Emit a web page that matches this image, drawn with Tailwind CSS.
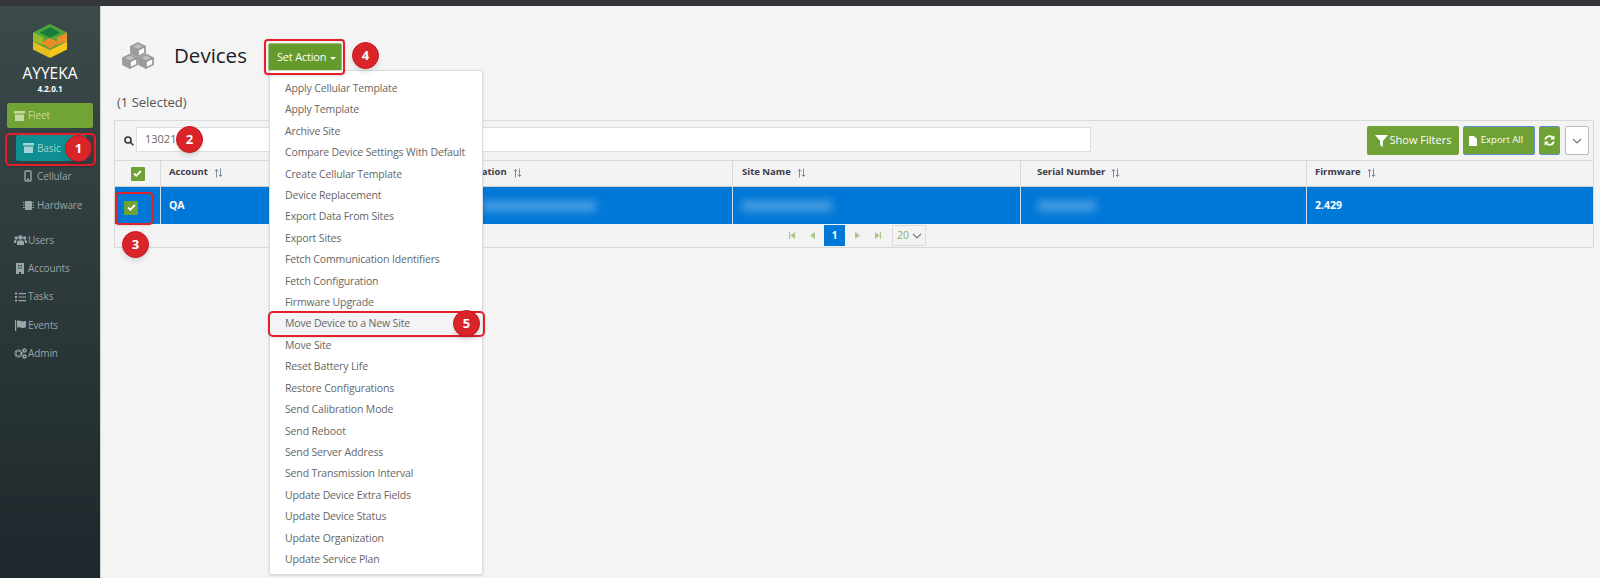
<!DOCTYPE html>
<html lang="en">
<head>
  <meta charset="UTF-8" />
  <title>Devices</title>
  <script src="https://cdn.jsdelivr.net/npm/@tailwindcss/browser@4"></script>
</head>
<body class="relative h-[578px] w-[1600px] overflow-hidden bg-[#f4f4f4] font-['Open_Sans',sans-serif] text-[#444]">

  <div class="h-[6px] bg-[#35363a]"></div>

  <div class="flex h-[572px]">
    <!-- sidebar -->
    <aside class="w-[101px] shrink-0 border-r border-[#cfd2d2] bg-gradient-to-b from-[#3c4a4a] to-[#1e282c] text-[10px] tracking-[-0.1px] text-[#9aa5a5]">
      <div class="flex justify-center pt-[18px]">
        <svg width="34" height="34" viewBox="3 1 30 34" preserveAspectRatio="none">
          <polygon points="18,1 33,9.500 33,18.500 18,27 3,18.500 3,9.500" fill="#4ea53a"/>
          <polygon points="18,4 27,9.500 18,15 9,9.500" fill="#1a7c3c"/>
          <polygon points="3,9.500 12,14.500 12,22 3,18.500" fill="#9ab92f"/>
          <polygon points="33,9.500 24,14.500 24,22 33,18.500" fill="#e8912a"/>
          <polygon points="18,15 26,19.500 18,26 10,19.500" fill="#ea8a24"/>
          <polygon points="3,18.500 18,27 18,35 3,26.500" fill="#e6c022"/>
          <polygon points="33,18.500 18,27 18,35 33,26.500" fill="#f6c81c"/>
        </svg>
      </div>
      <div class="mt-[5px] text-center text-[15.500px] leading-[20px] tracking-normal text-white">AYYEKA</div>
      <div class="text-center text-[8px] font-bold leading-[12px] tracking-normal text-white">4.2.0.1</div>

      <div class="mx-[7px] mt-[8px] flex h-[25px] items-center gap-[3px] rounded-[2px] bg-[#72a335] pl-[7px] text-[#c4d8a0]">
        <svg width="11" height="10" viewBox="0 0 11 10" fill="#c4d8a0"><path d="M0 0h11v2.500H0zM1 3.500h9V10H1z"/></svg>
        <span>Fleet</span>
      </div>
      <div class="ml-[16px] mr-[14px] mt-[7px] flex h-[26px] items-center gap-[3px] rounded-[2px] bg-[#0e8f91] pl-[7px] text-[#a5d2d2]">
        <svg width="11" height="10" viewBox="0 0 11 10" fill="#a5d2d2"><path d="M0 0h11v2.500H0zM1 3.500h9V10H1z"/></svg>
        <span>Basic</span>
      </div>
      <div class="mt-[1px] flex h-[28px] items-center gap-[5px] pl-[24px]">
        <svg width="8" height="12" viewBox="0 0 8 12" fill="none" stroke="#9aa5a5" stroke-width="1.400"><rect x="1" y="1" width="6" height="10" rx="1"/><path d="M3 9.300h2"/></svg>
        <span>Cellular</span>
      </div>
      <div class="mt-[1px] flex h-[29px] items-center gap-[3px] pl-[23px]">
        <svg width="11" height="11" viewBox="0 0 11 11" fill="#9aa5a5"><rect x="2" y="1" width="7" height="9" rx="1"/><path d="M0 2h1.500v1H0zM0 4.500h1.500v1H0zM0 7h1.500v1H0zM9.500 2H11v1H9.500zM9.500 4.500H11v1H9.500zM9.500 7H11v1H9.500z"/></svg>
        <span>Hardware</span>
      </div>

      <div class="mt-[6px] flex h-[28px] items-center gap-[1px] pl-[14px]">
        <svg width="13" height="10" viewBox="0 0 13 10" fill="#9aa5a5"><circle cx="6.500" cy="2.500" r="2.300"/><circle cx="2.300" cy="3" r="1.700"/><circle cx="10.700" cy="3" r="1.700"/><path d="M3 10V7.500c0-1.500 1-2.300 3.500-2.300S10 6 10 7.500V10zM0 8V6.500C0 5.500.7 5 2 5l.6.5C2.200 6 2 6.800 2 8zM13 8V6.500C13 5.500 12.300 5 11 5l-.6.5c.4.500.6 1.300.6 2.500z"/></svg>
        <span>Users</span>
      </div>
      <div class="flex h-[28.500px] items-center gap-[4px] pl-[16px]">
        <svg width="8" height="11" viewBox="0 0 8 11" fill="#9aa5a5"><path d="M0 0h8v11H5V9H3v2H0zM2 2v1.300h1.500V2zM4.500 2v1.300H6V2zM2 4.500v1.300h1.500V4.500zM4.500 4.500v1.300H6V4.500z" fill-rule="evenodd"/></svg>
        <span>Accounts</span>
      </div>
      <div class="flex h-[28.500px] items-center gap-[2px] pl-[15px]">
        <svg width="11" height="10" viewBox="0 0 11 10" fill="#9aa5a5"><path d="M0 .5h2v2H0zM3.500 1H11v1.200H3.500zM0 4h2v2H0zM3.500 4.400H11v1.200H3.500zM0 7.500h2v2H0zM3.500 8H11v1.200H3.500z"/></svg>
        <span>Tasks</span>
      </div>
      <div class="flex h-[28.500px] items-center gap-[2px] pl-[15px]">
        <svg width="11" height="11" viewBox="0 0 11 11" fill="#9aa5a5"><path d="M0 0h1.200v11H0zM2 1c2-1 3.500 0 5 .3 1.300.2 2.500 0 4-.6v6.600c-1.500.7-2.700.9-4 .7C5.500 7.700 4 6.800 2 7.700z"/></svg>
        <span>Events</span>
      </div>
      <div class="flex h-[28.500px] items-center gap-[1px] pl-[14px]">
        <svg width="13" height="11" viewBox="0 0 13 11"><circle cx="4.500" cy="5.500" r="3" fill="none" stroke="#9aa5a5" stroke-width="2.200" stroke-dasharray="1.500 .6"/><circle cx="10.500" cy="2.500" r="1.500" fill="none" stroke="#9aa5a5" stroke-width="1.500"/><circle cx="10.500" cy="8.500" r="1.500" fill="none" stroke="#9aa5a5" stroke-width="1.500"/></svg>
        <span>Admin</span>
      </div>
    </aside>

    <!-- main -->
    <main class="min-w-0 flex-1 pl-[13px] pr-[6px]">
      <div class="flex items-center pl-[8px] pt-[33px]">
        <svg width="32" height="27" viewBox="0 0 32 27">
          <g stroke="#9b9b9b" stroke-width="1.800" stroke-linejoin="round">
            <polygon points="16,1 23,4.500 16,8 9,4.500" fill="#bdbdbd"/>
            <polygon points="9,4.500 16,8 16,14.500 9,11" fill="#9b9b9b"/>
            <polygon points="23,4.500 16,8 16,14.500 23,11" fill="#fff"/>
            <polygon points="8,12.500 15,16 8,19.500 1,16" fill="#bdbdbd"/>
            <polygon points="1,16 8,19.500 8,26 1,22.500" fill="#9b9b9b"/>
            <polygon points="15,16 8,19.500 8,26 15,22.500" fill="#fff"/>
            <polygon points="24,12.500 31,16 24,19.500 17,16" fill="#bdbdbd"/>
            <polygon points="17,16 24,19.500 24,26 17,22.500" fill="#9b9b9b"/>
            <polygon points="31,16 24,19.500 24,26 31,22.500" fill="#fff"/>
          </g>
        </svg>
        <h1 class="ml-[20px] w-[74px] whitespace-nowrap text-[20.500px] font-medium leading-[32px] text-[#1c1c24]">Devices</h1>
        <button class="ml-[20px] mt-[4px] flex h-[28px] w-[74px] items-center gap-[4px] rounded-[2px] border border-[#9cbc7a] bg-[#649b2c] pl-[8px] pt-[1px] text-[11px] tracking-[-0.2px] text-white">
          Set Action
          <span class="mt-[1px] h-0 w-0 border-x-[3px] border-t-[3px] border-x-transparent border-t-white"></span>
        </button>
      </div>

      <p class="pl-[3px] pt-[21px] text-[13px] leading-[20px] text-[#555]">(1 Selected)</p>

      <section class="mt-[8px] w-[1480px] border border-[#d9d9d9] bg-[#f3f3f3]">
        <!-- toolbar -->
        <div class="flex h-[39px] items-center">
          <svg class="ml-[9px]" width="10" height="10" viewBox="0 0 10 10" fill="none" stroke="#333" stroke-width="1.600"><circle cx="4" cy="4" r="3"/><path d="M6.300 6.300 9.300 9.300"/></svg>
          <div class="mb-[2px] ml-[2px] flex h-[25px] w-[955px] items-center border border-[#dedede] bg-white pl-[8px] text-[11px] text-[#666]">13021</div>
          <button class="ml-[276px] flex h-[29px] w-[92px] items-center justify-center gap-[2px] rounded-[2px] bg-[#70a135] text-[11px] text-white">
            <svg width="13" height="12" viewBox="0 0 14 13" fill="white"><path d="M0 0h14L8.500 6.500V13l-3-2V6.500z"/></svg>
            Show Filters
          </button>
          <button class="ml-[4px] flex h-[29px] w-[72px] items-center justify-center gap-[4px] rounded-[2px] border border-[#5d8fd0] bg-[#70a135] pr-[6px] text-[9.500px] text-white">
            <svg width="8" height="10" viewBox="0 0 8 10" fill="white"><path d="M0 0h5l3 3v7H0z"/></svg>
            Export All
          </button>
          <button class="ml-[4px] flex h-[29px] w-[21px] items-center justify-center rounded-[2px] border border-[#5d8fd0] bg-[#70a135]">
            <svg width="11" height="11" viewBox="0 0 11 11" fill="none" stroke="white" stroke-width="1.800"><path d="M1.200 4.500A4.300 4.300 0 0 1 9 3.200M9.800 6.500A4.300 4.300 0 0 1 2 7.800"/><path d="M9.800 .8v3H6.800M1.200 10.200v-3h3" stroke-width="1.300"/></svg>
          </button>
          <button class="ml-[5px] flex h-[29px] w-[24px] items-center justify-center rounded-[2px] border border-[#bbb] bg-white">
            <svg width="10" height="6" viewBox="0 0 10 6" fill="none" stroke="#777" stroke-width="1.200"><path d="m1 1 4 4 4-4"/></svg>
          </button>
        </div>

        <!-- head row -->
        <div class="grid h-[27px] grid-cols-[46px_276px_296px_288px_286px_1fr] border-y border-[#d9d9d9] border-b-[#cfcfcf] text-[9.500px] font-bold text-[#3a3a48]">
          <div class="flex items-center justify-center border-r border-[#d9d9d9]">
            <span class="flex h-[14px] w-[14px] items-center justify-center rounded-[1px] bg-[#6ea235]">
              <svg width="9" height="7" viewBox="0 0 9 7" fill="none" stroke="white" stroke-width="1.800"><path d="m1 3.500 2.300 2.200L8 1"/></svg>
            </span>
          </div>
          <div class="flex items-center gap-[6px] border-r border-[#d9d9d9] pb-[2px] pl-[8px]">Account
            <svg width="9" height="10" viewBox="0 0 9 9" fill="none" stroke="#7d8ba0" stroke-width="1"><path d="M2.500 9V1M.8 2.700 2.500 1l1.700 1.700M6.500 0v8M4.800 6.300 6.500 8l1.700-1.700"/></svg>
          </div>
          <div class="flex items-center gap-[6px] border-r border-[#d9d9d9] pb-[2px] pl-[8px]">Organization
            <svg width="9" height="10" viewBox="0 0 9 9" fill="none" stroke="#7d8ba0" stroke-width="1"><path d="M2.500 9V1M.8 2.700 2.500 1l1.700 1.700M6.500 0v8M4.800 6.300 6.500 8l1.700-1.700"/></svg>
          </div>
          <div class="flex items-center gap-[6px] border-r border-[#d9d9d9] pb-[2px] pl-[9px]">Site Name
            <svg width="9" height="10" viewBox="0 0 9 9" fill="none" stroke="#7d8ba0" stroke-width="1"><path d="M2.500 9V1M.8 2.700 2.500 1l1.700 1.700M6.500 0v8M4.800 6.300 6.500 8l1.700-1.700"/></svg>
          </div>
          <div class="flex items-center gap-[6px] border-r border-[#d9d9d9] pb-[2px] pl-[16px]">Serial Number
            <svg width="9" height="10" viewBox="0 0 9 9" fill="none" stroke="#7d8ba0" stroke-width="1"><path d="M2.500 9V1M.8 2.700 2.500 1l1.700 1.700M6.500 0v8M4.800 6.300 6.500 8l1.700-1.700"/></svg>
          </div>
          <div class="flex items-center gap-[6px] pb-[2px] pl-[8px]">Firmware
            <svg width="9" height="10" viewBox="0 0 9 9" fill="none" stroke="#7d8ba0" stroke-width="1"><path d="M2.500 9V1M.8 2.700 2.500 1l1.700 1.700M6.500 0v8M4.800 6.300 6.500 8l1.700-1.700"/></svg>
          </div>
        </div>

        <!-- selected row -->
        <div class="grid h-[37px] grid-cols-[46px_276px_296px_288px_286px_1fr] bg-[#0078d7] text-[10.500px] font-bold text-white">
          <div class="flex items-center justify-center border-r border-[#cfe0f0] pr-[13px] pt-[4px]">
            <span class="flex h-[14px] w-[14px] items-center justify-center rounded-[1px] bg-[#6ea235]">
              <svg width="9" height="7" viewBox="0 0 9 7" fill="none" stroke="white" stroke-width="1.800"><path d="m1 3.500 2.300 2.200L8 1"/></svg>
            </span>
          </div>
          <div class="flex items-center border-r border-[#cfe0f0] pl-[8px]">QA</div>
          <div class="flex items-center border-r border-[#cfe0f0] pl-[45px]"><span class="h-[10px] w-[114px] bg-white/30 blur-[4px]"></span></div>
          <div class="flex items-center border-r border-[#cfe0f0] pl-[9px]"><span class="h-[10px] w-[90px] bg-white/30 blur-[4px]"></span></div>
          <div class="flex items-center border-r border-[#cfe0f0] pl-[17px]"><span class="h-[10px] w-[58px] bg-white/30 blur-[4px]"></span></div>
          <div class="flex items-center pl-[8px]">2.429</div>
        </div>

        <!-- pagination -->
        <div class="flex h-[23px] items-center justify-center gap-[9px] pl-[7px] text-[#a9c78a]">
          <svg width="6" height="7" viewBox="0 0 6 7" fill="currentColor"><path d="M0 0h1.200v7H0zM6 0v7L1.500 3.500z"/></svg>
          <svg class="ml-[6px]" width="5" height="7" viewBox="0 0 5 7" fill="currentColor"><path d="M5 0v7L0 3.500z"/></svg>
          <span class="flex h-[21px] w-[21px] items-center justify-center bg-[#0078d7] text-[10px] font-bold text-white">1</span>
          <svg class="ml-[1px]" width="5" height="7" viewBox="0 0 5 7" fill="currentColor"><path d="M0 0v7l5-3.500z"/></svg>
          <svg class="ml-[6px]" width="6" height="7" viewBox="0 0 6 7" fill="currentColor"><path d="M6 0H4.800v7H6zM0 0v7l4.500-3.500z"/></svg>
          <span class="ml-[2px] flex h-[21px] w-[34px] items-center gap-[3px] border border-[#dcdcdc] pl-[4px] text-[10.500px] text-[#8db060]">20
            <svg width="10" height="6" viewBox="0 0 10 6" fill="none" stroke="#777" stroke-width="1.100"><path d="m1 1 4 4 4-4"/></svg>
          </span>
        </div>
      </section>
    </main>
  </div>

  <!-- set action menu -->
  <ul class="absolute left-[269px] top-[70px] flex h-[505px] w-[214px] flex-col rounded-[2px] border border-[#dcdcdc] bg-white pt-[7px] text-[10.500px] leading-[21.400px] tracking-[-0.15px] text-[#666] shadow-sm">
    <li class="pl-[15px]">Apply Cellular Template</li>
    <li class="pl-[15px]">Apply Template</li>
    <li class="pl-[15px]">Archive Site</li>
    <li class="pl-[15px]">Compare Device Settings With Default</li>
    <li class="pl-[15px]">Create Cellular Template</li>
    <li class="pl-[15px]">Device Replacement</li>
    <li class="pl-[15px]">Export Data From Sites</li>
    <li class="pl-[15px]">Export Sites</li>
    <li class="pl-[15px]">Fetch Communication Identifiers</li>
    <li class="pl-[15px]">Fetch Configuration</li>
    <li class="pl-[15px]">Firmware Upgrade</li>
    <li class="bg-[#f2f4f5] pl-[15px]">Move Device to a New Site</li>
    <li class="pl-[15px]">Move Site</li>
    <li class="pl-[15px]">Reset Battery Life</li>
    <li class="pl-[15px]">Restore Configurations</li>
    <li class="pl-[15px]">Send Calibration Mode</li>
    <li class="pl-[15px]">Send Reboot</li>
    <li class="pl-[15px]">Send Server Address</li>
    <li class="pl-[15px]">Send Transmission Interval</li>
    <li class="pl-[15px]">Update Device Extra Fields</li>
    <li class="pl-[15px]">Update Device Status</li>
    <li class="pl-[15px]">Update Organization</li>
    <li class="pl-[15px]">Update Service Plan</li>
  </ul>

  <!-- red annotations over the screenshot -->
  <div class="absolute left-[5px] top-[133px] h-[33px] w-[91px] rounded-[5px] border-2 border-[#e3202a] shadow-sm"></div>
  <div class="absolute left-[115px] top-[192px] h-[33px] w-[38px] rounded-[4px] border-2 border-[#e3202a] shadow-sm"></div>
  <div class="absolute left-[264px] top-[39px] h-[36px] w-[81px] rounded-[4px] border-2 border-[#e3202a] shadow-sm"></div>
  <div class="absolute left-[268px] top-[311px] h-[26px] w-[217px] rounded-[5px] border-2 border-[#e3202a] shadow-sm"></div>

  <div class="absolute left-[65px] top-[135px] flex h-[27px] w-[27px] items-center justify-center rounded-full border border-[#c8141c] bg-[#d9242a] text-[13px] font-bold text-white shadow-md">1</div>
  <div class="absolute left-[176px] top-[126px] flex h-[27px] w-[27px] items-center justify-center rounded-full border border-[#c8141c] bg-[#d9242a] text-[13px] font-bold text-white shadow-md">2</div>
  <div class="absolute left-[122px] top-[231px] flex h-[27px] w-[27px] items-center justify-center rounded-full border border-[#c8141c] bg-[#d9242a] text-[13px] font-bold text-white shadow-md">3</div>
  <div class="absolute left-[352px] top-[42px] flex h-[27px] w-[27px] items-center justify-center rounded-full border border-[#c8141c] bg-[#d9242a] text-[13px] font-bold text-white shadow-md">4</div>
  <div class="absolute left-[453px] top-[310px] flex h-[27px] w-[27px] items-center justify-center rounded-full border border-[#c8141c] bg-[#d9242a] text-[13px] font-bold text-white shadow-md">5</div>
</body>
</html>
